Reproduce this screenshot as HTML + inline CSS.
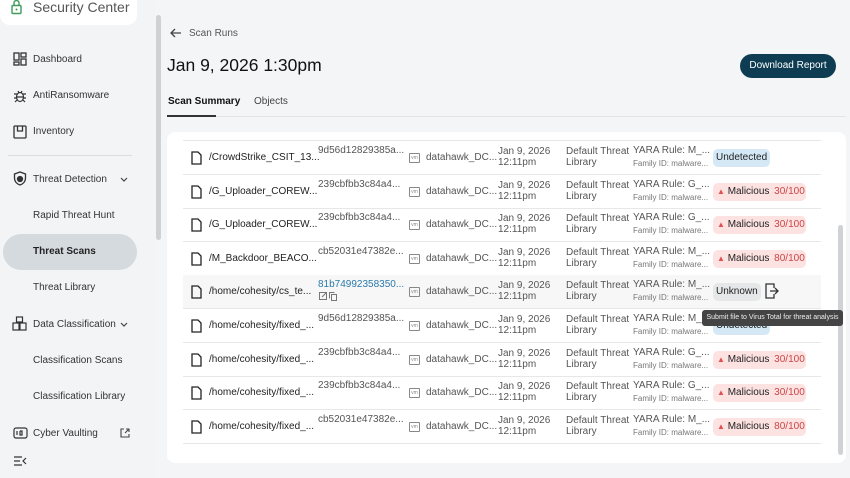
<!DOCTYPE html>
<html><head><meta charset="utf-8"><style>
*{box-sizing:border-box;margin:0;padding:0}
body{width:850px;height:478px;overflow:hidden;background:#f4f5f7;font-family:"Liberation Sans",sans-serif;position:relative;color:#222}
.a{position:absolute;white-space:nowrap}
.nav{font-size:10px;color:#333}
.sb{left:0;top:0;width:155px;height:478px;background:#f3f4f6}
.row{position:absolute;left:183px;width:638px;height:34px;border-bottom:1px solid #e6e7ea}
.row .t{position:absolute;font-size:10px;color:#555;white-space:nowrap}
.fn{left:26px;top:11px;color:#222!important}
.pill{position:absolute;left:530px;top:8px;height:18px;border-radius:5px;font-size:10px;line-height:18px;padding:0 3px;white-space:nowrap}
</style></head><body>
<div class="a sb"></div>
<div class="a" style="left:0;top:0;width:137px;height:25px;background:#fff;border-radius:0 0 10px 10px"></div>
<svg class="a" style="left:11px;top:0" width="11" height="15" viewBox="0 0 11 15"><path d="M3 5V3a2.5 2.5 0 0 1 5 0v2" stroke="#3f9a5c" stroke-width="1.4" fill="none"/><rect x="1" y="5.5" width="9" height="8" rx="1" stroke="#3f9a5c" stroke-width="1.4" fill="none"/><circle cx="5.5" cy="9.5" r="1" fill="#3f9a5c"/></svg>
<div class="a" style="left:33px;top:0;font-size:14px;color:#555;line-height:15px">Security Center</div>
<div class="a" style="left:156px;top:15px;width:5px;height:225px;background:#cfd1d4;border-radius:3px"></div>

<svg class="a" style="left:13px;top:52px" width="14" height="14" viewBox="0 0 14 14" fill="none" stroke="#333" stroke-width="1.3"><rect x="1" y="1" width="5" height="7"/><rect x="8" y="1" width="5" height="4"/><rect x="1" y="10" width="5" height="3"/><rect x="8" y="7" width="5" height="6"/></svg>
<div class="a nav" style="left:33px;top:54px">Dashboard</div>
<svg class="a" style="left:13px;top:89px" width="14" height="14" viewBox="0 0 14 14" fill="none" stroke="#333" stroke-width="1.2"><ellipse cx="7" cy="8" rx="3.5" ry="4.5"/><path d="M1 5h3M10 5h3M1 9h2.5M10.5 9H13M2 13l2-2M12 13l-2-2M5 2l1 2M9 2L8 4M4 8h6"/></svg>
<div class="a nav" style="left:33px;top:90px">AntiRansomware</div>
<svg class="a" style="left:13px;top:125px" width="14" height="14" viewBox="0 0 14 14" fill="none" stroke="#333" stroke-width="1.3"><rect x="1" y="1" width="12" height="12" rx="1"/><path d="M4.5 1v5h5V1"/></svg>
<div class="a nav" style="left:33px;top:126px">Inventory</div>
<div class="a" style="left:8px;top:155px;width:124px;height:1px;background:#dcdde0"></div>
<svg class="a" style="left:13px;top:171px" width="14" height="15" viewBox="0 0 14 15" fill="none" stroke="#333" stroke-width="1.3"><path d="M7 1L1.5 3v4c0 3.5 2.5 6 5.5 7 3-1 5.5-3.5 5.5-7V3z"/><circle cx="7" cy="8" r="2.5" fill="#333"/></svg>
<div class="a nav" style="left:33px;top:174px">Threat Detection</div>
<svg class="a" style="left:120px;top:177px" width="8" height="5" viewBox="0 0 8 5" fill="none" stroke="#444" stroke-width="1.2"><path d="M1 1l3 3 3-3"/></svg>
<div class="a nav" style="left:33px;top:210px">Rapid Threat Hunt</div>
<div class="a" style="left:3px;top:234px;width:134px;height:36px;background:#d5dadf;border-radius:18px"></div>
<div class="a nav" style="left:33px;top:246px;font-weight:bold;color:#222">Threat Scans</div>
<div class="a nav" style="left:33px;top:282px">Threat Library</div>
<svg class="a" style="left:12px;top:316px" width="15" height="15" viewBox="0 0 15 15" fill="none" stroke="#333" stroke-width="1.2"><rect x="4.5" y="1" width="6" height="5"/><rect x="1" y="7" width="6" height="7"/><rect x="8" y="7" width="6" height="7"/></svg>
<div class="a nav" style="left:33px;top:319px">Data Classification</div>
<svg class="a" style="left:120px;top:322px" width="8" height="5" viewBox="0 0 8 5" fill="none" stroke="#444" stroke-width="1.2"><path d="M1 1l3 3 3-3"/></svg>
<div class="a nav" style="left:33px;top:355px">Classification Scans</div>
<div class="a nav" style="left:33px;top:391px">Classification Library</div>
<svg class="a" style="left:13px;top:427px" width="15" height="12" viewBox="0 0 15 12" fill="none" stroke="#333" stroke-width="1.2"><rect x="1" y="1" width="13" height="10" rx="2"/><path d="M4 4v4M7 4v4h2V4H7"/></svg>
<div class="a nav" style="left:33px;top:428px">Cyber Vaulting</div>
<svg class="a" style="left:120px;top:428px" width="10" height="10" viewBox="0 0 10 10" fill="none" stroke="#444" stroke-width="1.1"><path d="M4 1H1v8h8V6M6 1h3v3M9 1L5 5"/></svg>
<svg class="a" style="left:14px;top:456px" width="13" height="10" viewBox="0 0 13 10" fill="none" stroke="#333" stroke-width="1.2"><path d="M0 1h8M0 5h6M0 9h8M12 2L9 5l3 3"/></svg>

<svg class="a" style="left:170px;top:27px" width="12" height="12" viewBox="0 0 12 12" fill="none" stroke="#444" stroke-width="1.3"><path d="M11 6H1M5 2L1 6l4 4"/></svg>
<div class="a" style="left:189px;top:28px;font-size:10px;color:#555">Scan Runs</div>
<div class="a" style="left:167px;top:55px;font-size:17.5px;color:#111">Jan 9, 2026 1:30pm</div>
<div class="a" style="left:740px;top:54px;width:96px;height:24px;border-radius:12px;background:#0e3d53;color:#fff;font-size:10px;line-height:24px;text-align:center">Download Report</div>
<div class="a" style="left:168px;top:96px;font-size:10px;color:#111;font-weight:bold">Scan Summary</div>
<div class="a" style="left:254px;top:96px;font-size:10px;color:#444">Objects</div>
<div class="a" style="left:167px;top:116px;width:679px;height:1px;background:#e3e4e7"></div>
<div class="a" style="left:167px;top:115px;width:49px;height:2px;background:#333"></div>

<div class="a" style="left:167px;top:132px;width:679px;height:331px;background:#fff;border-radius:8px"></div>
<div class="a" style="left:183px;top:140px;width:638px;height:1px;background:#e6e7ea"></div>
<div class="a" style="left:838px;top:225px;width:5px;height:230px;background:#d0d2d5;border-radius:3px"></div>

<div id="rows"></div>
<script>
var R=[["/CrowdStrike_CSIT_13...","9d56d12829385a...","u"],["/G_Uploader_COREW...","239cbfbb3c84a4...","m","30/100","G_"],["/G_Uploader_COREW...","239cbfbb3c84a4...","m","30/100","G_"],["/M_Backdoor_BEACO...","cb52031e47382e...","m","80/100"],["/home/cohesity/cs_te...","81b74992358350...","k"],["/home/cohesity/fixed_...","9d56d12829385a...","u"],["/home/cohesity/fixed_...","239cbfbb3c84a4...","m","30/100","G_"],["/home/cohesity/fixed_...","239cbfbb3c84a4...","m","30/100","G_"],["/home/cohesity/fixed_...","cb52031e47382e...","m","80/100"]];
var h="";
R.forEach(function(r,i){
var top=141+i*33.6;
var bg=r[2]=="k"?"background:#f7f7f8;":"";
h+='<div class="row" style="top:'+top+'px;'+bg+'">';
h+='<svg style="position:absolute;left:8px;top:10px" width="11" height="14" viewBox="0 0 11 14" fill="none" stroke="#222" stroke-width="1.3"><path d="M1 1h6l3 3v9H1z"/></svg>';
h+='<div class="t fn">'+r[0]+'</div>';
h+='<div class="t" style="left:135px;top:4px;'+(r[2]=="k"?'color:#2a7aa8;':'')+'">'+r[1]+'</div>';
if(r[2]=="k")h+='<svg style="position:absolute;left:136px;top:17px" width="20" height="9" viewBox="0 0 20 9" fill="none" stroke="#777" stroke-width="1"><rect x="0.5" y="0.5" width="7" height="7"/><path d="M3 5l4-4"/><rect x="12.5" y="2.5" width="5" height="6"/><path d="M10.5 6.5V0.5h5"/></svg>';
h+='<div style="position:absolute;left:226px;top:12px;width:11px;height:10px;border:1px solid #888;border-radius:1px;font-size:5px;color:#888;text-align:center;line-height:8px">vm</div>';
h+='<div class="t" style="left:243px;top:11px">datahawk_DC...</div>';
h+='<div class="t" style="left:315px;top:5px;line-height:11px">Jan 9, 2026<br>12:11pm</div>';
h+='<div class="t" style="left:383px;top:5px;line-height:11px">Default Threat<br>Library</div>';
h+='<div class="t" style="left:450px;top:4px">YARA Rule: '+(r[4]||"M_")+'...</div>';
h+='<div class="t" style="left:450px;top:18px;font-size:8px;color:#777">Family ID: malware...</div>';
if(r[2]=="u")h+='<div class="pill" style="background:#d5e8f6;color:#222">Undetected</div>';
if(r[2]=="k")h+='<div class="pill" style="background:#e6e7e9;color:#222">Unknown</div><svg style="position:absolute;left:582px;top:8px" width="14" height="16" viewBox="0 0 14 16" fill="none" stroke="#333" stroke-width="1.3"><path d="M9 5V1H1v14h8v-4M5 8h8M10 5l3 3-3 3"/></svg>';
if(r[2]=="m")h+='<div class="pill" style="background:#fde2e2;color:#222;width:93px;padding:0 4px"><span style="color:#e05050;font-size:8px">&#9650;</span> Malicious <span style="color:#c44;margin-left:2px">'+r[3]+'</span></div>';
h+='</div>';
});
document.getElementById("rows").innerHTML=h;
</script>
<div class="a" style="left:702px;top:310px;width:141px;height:16px;background:#444;border-radius:3px;color:#eee;font-size:7px;line-height:16px;text-align:center">Submit file to Virus Total for threat analysis</div>
</body></html>
